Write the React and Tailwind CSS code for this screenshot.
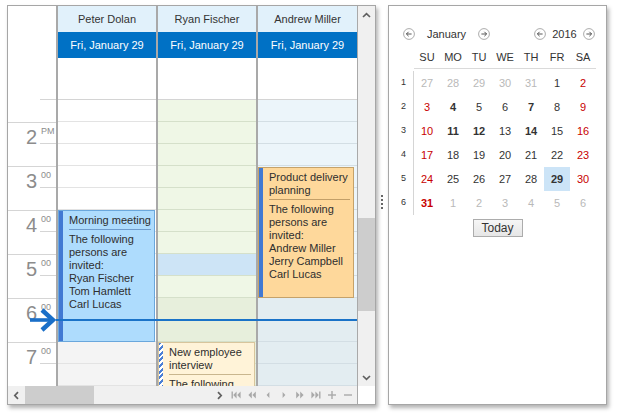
import React from "react";

const RESOURCES = [
  {
    name: "Peter Dolan",
    width: "w-[100px]",
    slot: (i) => (i >= 11 ? "bg-[#f4f4f4] border-[#e3e3e3]" : "bg-white border-[#e3e3e3]"),
  },
  {
    name: "Ryan Fischer",
    width: "w-[100px]",
    slot: (i) =>
      i === 7
        ? "bg-[#cde4f6] border-[#d5e0ca]"
        : i >= 9
        ? "bg-[#e7efdc] border-[#d5e0ca]"
        : "bg-[#eff7e6] border-[#d5e0ca]",
  },
  {
    name: "Andrew Miller",
    width: "w-[101px]",
    slot: (i) => (i >= 9 ? "bg-[#e3edf1] border-[#d3dee4]" : "bg-[#ecf5fa] border-[#d3dee4]"),
  },
];

const HOURS = [
  { h: "2", m: "PM" },
  { h: "3", m: "00" },
  { h: "4", m: "00" },
  { h: "5", m: "00" },
  { h: "6", m: "00" },
  { h: "7", m: "00" },
];

const WEEKS = [
  [1, [["27", "o"], ["28", "o"], ["29", "o"], ["30", "o"], ["31", "o"], ["1", ""], ["2", "r"]]],
  [2, [["3", "r"], ["4", "b"], ["5", ""], ["6", ""], ["7", "b"], ["8", ""], ["9", "r"]]],
  [3, [["10", "r"], ["11", "b"], ["12", "b"], ["13", ""], ["14", "b"], ["15", ""], ["16", "r"]]],
  [4, [["17", "r"], ["18", ""], ["19", ""], ["20", ""], ["21", ""], ["22", ""], ["23", "r"]]],
  [5, [["24", "r"], ["25", ""], ["26", ""], ["27", ""], ["28", ""], ["29", "sel"], ["30", "r"]]],
  [6, [["31", "rb"], ["1", "o"], ["2", "o"], ["3", "o"], ["4", "o"], ["5", "o"], ["6", "o"]]],
];

const DAY_STYLE = {
  "": "text-[#333]",
  o: "text-[#b9b9b9]",
  r: "text-[#c80000]",
  b: "font-bold text-[#333]",
  rb: "font-bold text-[#c80000]",
  sel: "font-bold text-[#333] bg-[#cce4f7]",
};

function Appointment({ className, stripe, divider, title, body }) {
  return (
    <div
      className={`absolute flex overflow-hidden border text-[11px] leading-[13px] text-[#2e2e2e] ${className}`}
    >
      <div className={`w-[4px] shrink-0 ${stripe}`} />
      <div className="min-w-0 flex-1 pl-[6px] pr-[3px] pt-[3px]">
        <div className={`border-b pb-[2px] ${divider}`}>
          {title.map((t) => (
            <div key={t} className="whitespace-nowrap">
              {t}
            </div>
          ))}
        </div>
        <div className="pt-[3px]">
          {body.map((t) => (
            <div key={t} className="whitespace-nowrap">
              {t}
            </div>
          ))}
        </div>
      </div>
    </div>
  );
}

function Chevron({ d }) {
  return (
    <svg width="9" height="9" viewBox="0 0 9 9">
      <path d={d} fill="none" stroke="#606060" strokeWidth="1.7" />
    </svg>
  );
}

function NavIcon({ children }) {
  return (
    <div className="flex h-full w-[16px] items-center justify-center">
      <svg width="10" height="8" viewBox="0 0 10 8" fill="#a9a9a9">
        {children}
      </svg>
    </div>
  );
}

function CircleArrow({ left }) {
  return (
    <svg width="12" height="12" viewBox="0 0 12 12" className="shrink-0">
      <circle cx="6" cy="6" r="5.4" fill="white" stroke="#a3a3a3" strokeWidth="0.9" />
      {left ? (
        <path d="M8.6 6H3.4M5.6 3.8L3.4 6l2.2 2.2" fill="none" stroke="#444" strokeWidth="0.9" />
      ) : (
        <path d="M3.4 6h5.2M6.4 3.8L8.6 6 6.4 8.2" fill="none" stroke="#444" strokeWidth="0.9" />
      )}
    </svg>
  );
}

function Ruler() {
  return (
    <div className="flex w-[48px] shrink-0 flex-col bg-white text-[#8c8c8c]">
      <div className="flex h-[94px] items-end justify-end">
        <div className="w-[16px] border-b border-[#d5d5d5]" />
      </div>
      <div className="h-[22px]" />
      {HOURS.map((x) => (
        <div key={x.h} className="h-[44px] border-t border-[#d5d5d5]">
          <div className="flex h-[21px] justify-end">
            <span className="mb-[-3px] self-end pr-[3px] text-[20px] leading-none">{x.h}</span>
            <div className="w-[16px] border-b border-[#d5d5d5] pl-[1px] pt-[4px] text-[9px] leading-none">
              {x.m}
            </div>
          </div>
        </div>
      ))}
    </div>
  );
}

function ResourceColumn({ res, children }) {
  return (
    <div className={`flex shrink-0 flex-col border-l-2 border-[#a9a9a9] ${res.width}`}>
      <div className="flex h-[26px] items-center justify-center bg-[#e1f1fb] text-[#333]">{res.name}</div>
      <div className="flex h-[26px] items-center justify-center bg-[#0071c5] text-white">Fri, January 29</div>
      <div className="h-[42px] border-b border-[#d4d4d4] bg-white" />
      <div className="relative h-[286px] overflow-hidden">
        {Array.from({ length: 13 }, (_, i) => (
          <div key={i} className={`h-[22px] border-b ${res.slot(i)}`} />
        ))}
        {children}
      </div>
    </div>
  );
}

function Scheduler() {
  return (
    <div className="flex h-[400px] w-[369px] shrink-0 border border-[#a6a6a6] bg-white shadow-[2px_3px_4px_rgba(0,0,0,0.3)]">
      <div className="flex w-[349px] flex-col">
        <div className="relative flex h-[380px]">
          <Ruler />
          <ResourceColumn res={RESOURCES[0]}>
            <Appointment
              className="left-0 right-[1px] top-[110px] h-[132px] border-[#6aa7dc] bg-[#aedcfd]"
              stripe="bg-[#4179d3]"
              divider="border-[#6f9ccc]"
              title={["Morning meeting"]}
              body={["The following", "persons are", "invited:", "Ryan Fischer", "Tom Hamlett", "Carl Lucas"]}
            />
          </ResourceColumn>
          <ResourceColumn res={RESOURCES[1]}>
            <Appointment
              className="left-0 right-[1px] top-[242px] h-[70px] border-[#d8c59c] bg-[#fff3d8]"
              stripe="bg-[repeating-linear-gradient(135deg,#4a7fd6_0px,#4a7fd6_2px,#ffffff_2px,#ffffff_4px)]"
              divider="border-[#c9b68e]"
              title={["New employee", "interview"]}
              body={["The following", "persons are"]}
            />
          </ResourceColumn>
          <ResourceColumn res={RESOURCES[2]}>
            <Appointment
              className="left-0 right-[3px] top-[67px] h-[131px] border-[#c5a26a] bg-[#fed89b]"
              stripe="bg-[#4179d3]"
              divider="border-[#c39f68]"
              title={["Product delivery", "planning"]}
              body={["The following", "persons are", "invited:", "Andrew Miller", "Jerry Campbell", "Carl Lucas"]}
            />
          </ResourceColumn>
          <div className="absolute left-[48px] right-0 top-[313px] h-[2px] bg-[#1a73c8]" />
          <svg className="absolute left-[22px] top-[302px]" width="26" height="24" viewBox="0 0 26 24">
            <path d="M0 12H23" stroke="#1a6fc8" strokeWidth="3.6" />
            <path d="M12 2L23 12 12 22" fill="none" stroke="#1a6fc8" strokeWidth="4.4" />
          </svg>
        </div>
        <div className="flex h-[18px] items-stretch bg-[#f0f0f0]">
          <div className="flex w-[16px] items-center justify-center">
            <Chevron d="M6 1.2L2.8 4.5 6 7.8" />
          </div>
          <div className="ml-[1px] w-[69px] bg-[#cdcdcd]" />
          <div className="flex-1" />
          <div className="flex w-[16px] items-center justify-center">
            <Chevron d="M3 1.2L6.2 4.5 3 7.8" />
          </div>
          <div className="flex w-[130px] items-center pl-[1px]">
            <NavIcon>
              <rect x="0.5" y="0.5" width="1.4" height="7" />
              <path d="M5.6 0.5L2.2 4 5.6 7.5Z M9.6 0.5L6.2 4 9.6 7.5Z" />
            </NavIcon>
            <NavIcon>
              <path d="M4.8 0.5L1.4 4 4.8 7.5Z M8.8 0.5L5.4 4 8.8 7.5Z" />
            </NavIcon>
            <NavIcon>
              <path d="M6.4 1L3.6 4 6.4 7Z" />
            </NavIcon>
            <NavIcon>
              <path d="M3.6 1L6.4 4 3.6 7Z" />
            </NavIcon>
            <NavIcon>
              <path d="M1.2 0.5L4.6 4 1.2 7.5Z M5.2 0.5L8.6 4 5.2 7.5Z" />
            </NavIcon>
            <NavIcon>
              <path d="M0.4 0.5L3.8 4 0.4 7.5Z M4.4 0.5L7.8 4 4.4 7.5Z" />
              <rect x="8.1" y="0.5" width="1.4" height="7" />
            </NavIcon>
            <NavIcon>
              <rect x="1" y="3.3" width="8" height="1.4" />
              <rect x="4.3" y="0" width="1.4" height="8" />
            </NavIcon>
            <NavIcon>
              <rect x="1" y="3.3" width="8" height="1.4" />
            </NavIcon>
          </div>
        </div>
      </div>
      <div className="flex w-[18px] flex-col border-l border-[#a9a9a9]">
        <div className="flex flex-1 flex-col bg-[#f0f0f0]">
          <div className="flex h-[18px] items-center justify-center">
            <Chevron d="M1 6L4.5 2.6 8 6" />
          </div>
          <div className="mt-[194px] h-[93px] bg-[#cdcdcd]" />
          <div className="flex-1" />
          <div className="flex h-[18px] items-center justify-center">
            <Chevron d="M1 3L4.5 6.4 8 3" />
          </div>
        </div>
        <div className="h-[18px] bg-white" />
      </div>
    </div>
  );
}

function Calendar() {
  return (
    <div className="flex h-[400px] w-[219px] shrink-0 flex-col border border-[#a6a6a6] bg-white text-[11px] text-[#333] shadow-[2px_3px_4px_rgba(0,0,0,0.3)]">
      <div className="mt-[18px] flex h-[20px] items-center pl-[14px] pr-[11px]">
        <CircleArrow left />
        <div className="w-[63px] text-center">January</div>
        <CircleArrow />
        <div className="flex-1" />
        <CircleArrow left />
        <div className="w-[37px] text-center">2016</div>
        <CircleArrow />
      </div>
      <div className="mt-[3px] flex pl-[9px]">
        <div className="w-[16px]" />
        <div className="flex h-[22px] border-b border-[#dadada]">
          {["SU", "MO", "TU", "WE", "TH", "FR", "SA"].map((d) => (
            <div key={d} className="flex w-[26px] items-center justify-center">
              {d}
            </div>
          ))}
        </div>
      </div>
      <div className="mt-[2px] flex pl-[9px]">
        <div className="w-[16px] border-r border-[#d5d5d5]">
          {WEEKS.map(([n]) => (
            <div key={n} className="flex h-[24px] items-center pl-[3px] text-[9px]">
              {n}
            </div>
          ))}
        </div>
        <div>
          {WEEKS.map(([n, days]) => (
            <div key={n} className="flex">
              {days.map(([d, t], i) => (
                <div key={i} className={`flex h-[24px] w-[26px] items-center justify-center ${DAY_STYLE[t]}`}>
                  {d}
                </div>
              ))}
            </div>
          ))}
        </div>
      </div>
      <div className="mt-[4px] flex justify-center">
        <div className="flex h-[18px] w-[50px] items-center justify-center border border-[#acacac] bg-[linear-gradient(#f6f6f6,#e6e6e6)] text-[12px]">
          Today
        </div>
      </div>
    </div>
  );
}

export default function App() {
  return (
    <div className="flex h-[420px] w-[620px] items-start overflow-hidden bg-white pl-[7px] pt-[5px] font-['Liberation_Sans',Arial,sans-serif] text-[11px]">
      <Scheduler />
      <div className="flex h-[400px] w-[12px] shrink-0 items-center justify-center">
        <div className="mt-[-6px] flex flex-col gap-[2px]">
          <div className="h-[2px] w-[2px] bg-[#666]" />
          <div className="h-[2px] w-[2px] bg-[#666]" />
          <div className="h-[2px] w-[2px] bg-[#666]" />
          <div className="h-[2px] w-[2px] bg-[#666]" />
        </div>
      </div>
      <Calendar />
    </div>
  );
}
